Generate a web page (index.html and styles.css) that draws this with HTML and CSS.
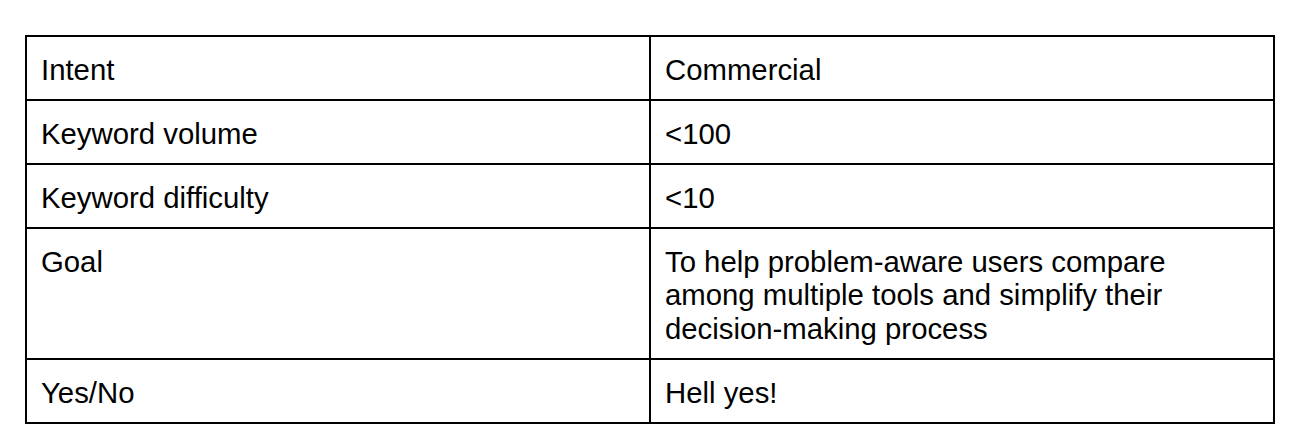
FILE: index.html
```html
<!DOCTYPE html>
<html lang="en">
<head>
<meta charset="utf-8">
<title>Keyword table</title>
<link rel="stylesheet" href="styles.css">
</head>
<body>
<div class="page">
  <div class="kw-table">
    <div class="cell">Intent</div>
    <div class="cell">Commercial</div>
    <div class="cell">Keyword volume</div>
    <div class="cell">&lt;100</div>
    <div class="cell">Keyword difficulty</div>
    <div class="cell">&lt;10</div>
    <div class="cell">Goal</div>
    <div class="cell">To help problem-aware users compare<br>among multiple tools and simplify their<br>decision-making process</div>
    <div class="cell">Yes/No</div>
    <div class="cell">Hell yes!</div>
  </div>
</div>
</body>
</html>
```

FILE: styles.css
```css
html, body {
  margin: 0;
  padding: 0;
  background: #ffffff;
}

.page {
  padding: 35px 0 0 25px;
}

.kw-table {
  width: 1250px;
  box-sizing: border-box;
  display: grid;
  grid-template-columns: 1fr 1fr;
  border-top: 2px solid #000;
  border-left: 2px solid #000;
  font-family: "Liberation Sans", Arial, Helvetica, sans-serif;
  font-size: 29.33px;
  line-height: 33.5px;
  color: #000;
}

.cell {
  border-right: 2px solid #000;
  border-bottom: 2px solid #000;
  padding: 15.5px 14px 13px;
}
```
